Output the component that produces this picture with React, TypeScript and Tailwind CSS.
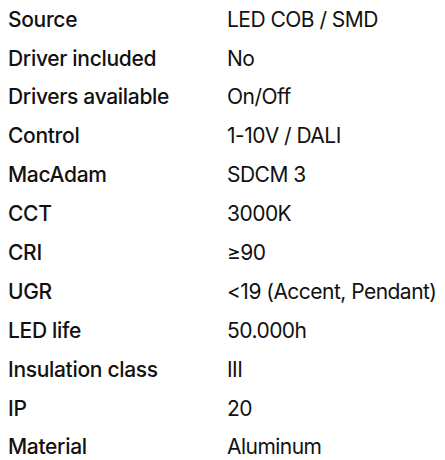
import React from "react";

const specs = [
  { label: "Source", value: "LED COB / SMD" },
  { label: "Driver included", value: "No" },
  { label: "Drivers available", value: "On/Off" },
  { label: "Control", value: "1-10V / DALI" },
  { label: "MacAdam", value: "SDCM 3" },
  { label: "CCT", value: "3000K" },
  { label: "CRI", value: "≥90" },
  { label: "UGR", value: "<19 (Accent, Pendant)" },
  { label: "LED life", value: "50.000h" },
  { label: "Insulation class", value: "III" },
  { label: "IP", value: "20" },
  { label: "Material", value: "Aluminum" },
];

const App = () => {
  return (
    <div className="w-[445px] h-[460px] bg-white overflow-hidden font-['Inter',sans-serif] text-[#111] text-[21px] tracking-[-0.025em]">
      <dl className="pl-[8px]">
        {specs.map((s) => (
          <div key={s.label} className="flex items-center h-[38.9px]">
            <dt className="w-[219px] font-medium tracking-[-0.015em]">{s.label}</dt>
            <dd>{s.value}</dd>
          </div>
        ))}
      </dl>
    </div>
  );
};

export default App;
